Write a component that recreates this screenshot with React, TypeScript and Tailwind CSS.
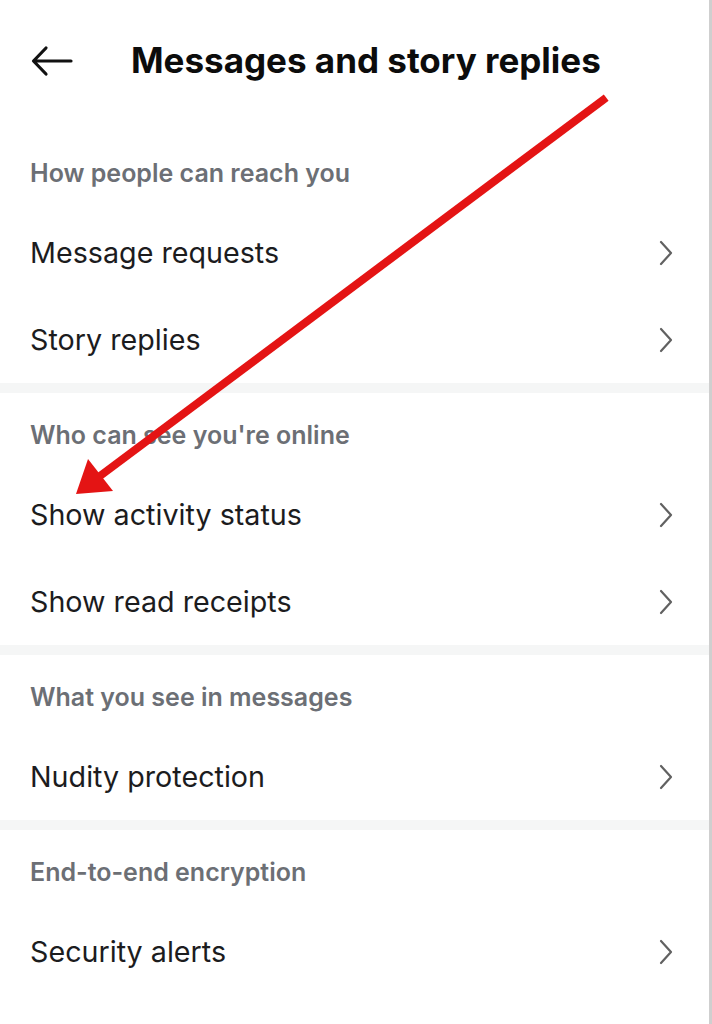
import React from "react";

const Chevron = () => (
  <svg width="16" height="26" viewBox="0 0 16 26" fill="none" className="shrink-0">
    <path d="M3 2 L13 13 L3 24" stroke="#616161" strokeWidth="2.2" strokeLinecap="round" strokeLinejoin="round" />
  </svg>
);

const Row = ({ label }: { label: string }) => (
  <div className="flex h-[87px] items-center justify-between pl-[30px] pr-[35px]">
    <span className="text-[28.7px] leading-[34px] text-[#1c1c1e]">{label}</span>
    <Chevron />
  </div>
);

const Label = ({ text }: { text: string }) => (
  <div className="flex h-[78px] items-center pl-[30px] pt-[6px]">
    <span className="text-[25px] leading-[30px] font-semibold text-[#6c6f75]">{text}</span>
  </div>
);

const Sep = () => <div className="h-[10px] bg-[#f5f6f6]" />;

export default function App() {
  return (
    <div
      className="relative min-h-[1024px] w-[712px] overflow-hidden border-r-[3px] border-[#cfcfcf] bg-white"
      style={{ fontFamily: "Inter, 'Noto Sans', sans-serif" }}
    >
      <div className="flex h-[131px] items-start pt-[40px]">
        <div className="flex w-[131px] justify-start pl-[31px] pt-[5px]">
          <svg width="42" height="32" viewBox="0 0 42 32" fill="none">
            <path d="M40 16 H3 M15 3 L2.5 16 L15 29" stroke="#111" strokeWidth="3.2" strokeLinecap="round" strokeLinejoin="round" />
          </svg>
        </div>
        <h1 className="text-[35px] leading-[40px] font-bold text-[#0c0c0c]">
          Messages and story replies
        </h1>
      </div>

      <Label text="How people can reach you" />
      <Row label="Message requests" />
      <Row label="Story replies" />
      <Sep />
      <Label text="Who can see you're online" />
      <Row label="Show activity status" />
      <Row label="Show read receipts" />
      <Sep />
      <Label text="What you see in messages" />
      <Row label="Nudity protection" />
      <Sep />
      <Label text="End-to-end encryption" />
      <Row label="Security alerts" />

      <svg className="pointer-events-none absolute left-0 top-0" width="712" height="1024" viewBox="0 0 712 1024">
        <line x1="603" y1="100" x2="100" y2="476" stroke="#e41414" strokeWidth="8" strokeLinecap="square" />
        <polygon points="76,494 88,459 113,491" fill="#e41414" />
      </svg>
    </div>
  );
}
